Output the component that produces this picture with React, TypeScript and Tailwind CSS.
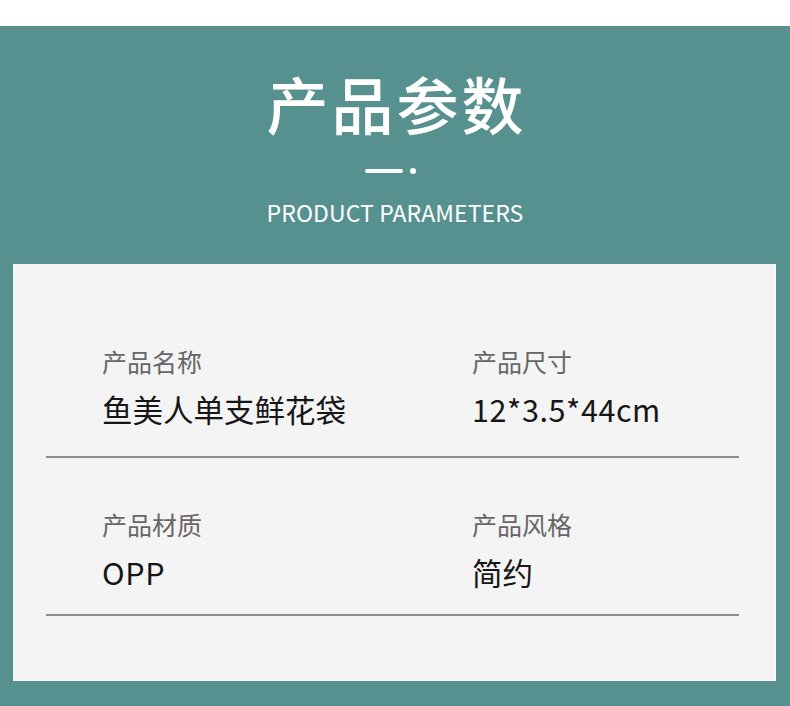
const params = [
  [
    { label: "产品名称", value: "鱼美人单支鲜花袋", latin: false },
    { label: "产品尺寸", value: "12*3.5*44cm", latin: true },
  ],
  [
    { label: "产品材质", value: "OPP", latin: true },
    { label: "产品风格", value: "简约", latin: false },
  ],
];

const font = { fontFamily: '"Noto Sans CJK SC", "Noto Sans", sans-serif' };

export default function App() {
  return (
    <div className="w-[790px] h-[706px] bg-white overflow-hidden" style={font}>
      <div className="mt-[26px] h-[680px] bg-[#57918f] flex flex-col">
        {/* Header */}
        <div className="flex flex-col items-center pt-[46px]">
          <h1 className="text-[62px] leading-[62px] font-medium tracking-[3px] text-white pl-[3px]">
            产品参数
          </h1>
          <div className="mt-[34px] flex items-center gap-[7px] pr-[9px]">
            <div className="w-[38px] h-[4px] rounded-full bg-white" />
            <div className="w-[6px] h-[6px] rounded-full bg-white" />
          </div>
          <p className="mt-[27px] text-[23px] leading-[23px] tracking-[0.1px] text-white">
            PRODUCT PARAMETERS
          </p>
        </div>

        {/* Card */}
        <div className="mt-[40px] ml-[13px] w-[763px] h-[417px] bg-[#f4f4f4] border border-[#fbfbfb] pl-[32px] pr-[36px]">
          {params.map((row, i) => (
            <div
              key={i}
              className={`grid grid-cols-[370px_1fr] pl-[56px] border-b-2 border-[#8e8e8e] ${
                i === 0 ? "pt-[84px] pb-[31px]" : "pt-[54px] pb-[26px]"
              }`}
            >
              {row.map((item) => (
                <div key={item.label} className="flex flex-col">
                  <span className="text-[25px] leading-[25px] text-[#666666]">
                    {item.label}
                  </span>
                  <span
                    className={`mt-[20px] text-[30.5px] leading-[31px] text-[#161616] ${
                      item.latin ? "tracking-[0.6px]" : "tracking-normal"
                    }`}
                  >
                    {item.value}
                  </span>
                </div>
              ))}
            </div>
          ))}
        </div>
      </div>
    </div>
  );
}
